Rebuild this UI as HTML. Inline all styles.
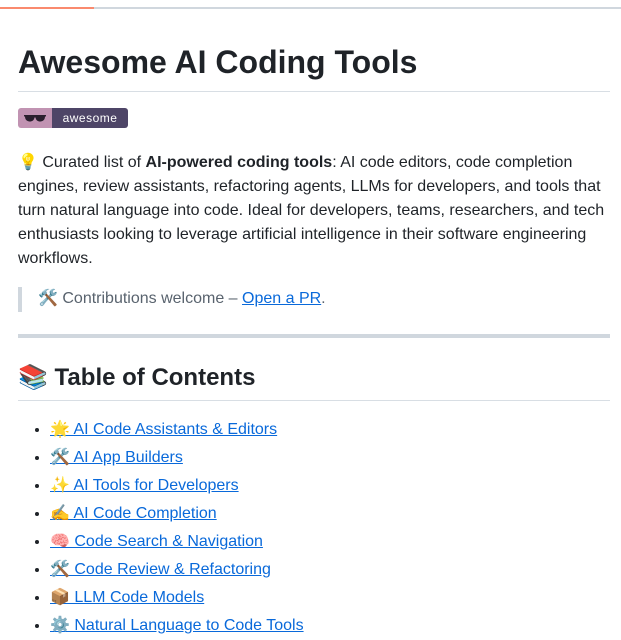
<!DOCTYPE html>
<html><head><meta charset="utf-8"><style>
body{margin:0;background:#fff;font-family:"Liberation Sans","Noto Sans CJK SC",sans-serif;color:#1f2328;width:621px;height:620px;overflow:hidden;position:relative}
.top{position:absolute;top:7px;left:0;right:0;height:2px;background:#d0d7de}
.top i{position:absolute;left:0;top:0;width:94px;height:2px;background:#fa8a6e}
.c{position:absolute;left:18px;width:592px;top:0}
h1{position:absolute;top:42px;margin:0;font-size:32px;font-weight:bold;line-height:40px;white-space:nowrap}
.hr1{position:absolute;top:91px;left:0;width:592px;height:1px;background:#d8dee4}
.badge{position:absolute;top:108px;left:0;width:110px;height:20px;border-radius:3px;overflow:hidden;display:flex}
.badge .l{width:34px;background:#c193b2;display:flex;align-items:center;justify-content:center}
.badge .r{flex:1;background:#4e4567;color:#fff;font-size:12px;line-height:20px;text-align:center;letter-spacing:.5px}
p{position:absolute;top:151px;margin:0;font-size:16px;line-height:24px;width:592px}
.bq{position:absolute;top:287px;left:0;height:25px;border-left:4px solid #d0d7de;padding-left:16px;color:#59636e;font-size:16px;line-height:24px;white-space:nowrap}
a{color:#0969da;text-decoration:underline}
.hr2{position:absolute;top:334px;left:0;width:592px;height:4px;background:#d0d7de}
h2{position:absolute;top:363px;margin:0;font-size:24px;line-height:30px;font-weight:bold;white-space:nowrap}
.hr3{position:absolute;top:400px;left:0;width:592px;height:1px;background:#d8dee4}
ul{position:absolute;top:416px;left:0;margin:0;padding-left:32px;font-size:16px;line-height:28px}
li{white-space:nowrap}
</style></head><body>
<div class="top"><i></i></div>
<div class="c">
<h1>Awesome AI Coding Tools</h1>
<div class="hr1"></div>
<div class="badge"><div class="l"><svg width="22" height="10" viewBox="0 0 22 10"><path d="M0 2h22v1.5h-1c0 4-3 5-5 5s-4-1-4.5-4h-1C10 7.5 8 8.5 6 8.5s-5-1-5-5H0z" fill="#2a1f2d"/></svg></div><div class="r">awesome</div></div>
<p>💡 Curated list of <b>AI-powered coding tools</b>: AI code editors, code completion engines, review assistants, refactoring agents, LLMs for developers, and tools that turn natural language into code. Ideal for developers, teams, researchers, and tech enthusiasts looking to leverage artificial intelligence in their software engineering workflows.</p>
<div class="bq">🛠️ Contributions welcome – <a>Open a PR</a>.</div>
<div class="hr2"></div>
<h2>📚 Table of Contents</h2>
<div class="hr3"></div>
<ul>
<li><a>🌟 AI Code Assistants &amp; Editors</a></li>
<li><a>🛠️ AI App Builders</a></li>
<li><a>✨ AI Tools for Developers</a></li>
<li><a>✍️ AI Code Completion</a></li>
<li><a>🧠 Code Search &amp; Navigation</a></li>
<li><a>🛠️ Code Review &amp; Refactoring</a></li>
<li><a>📦 LLM Code Models</a></li>
<li><a>⚙️ Natural Language to Code Tools</a></li>
</ul>
</div>
</body></html>
